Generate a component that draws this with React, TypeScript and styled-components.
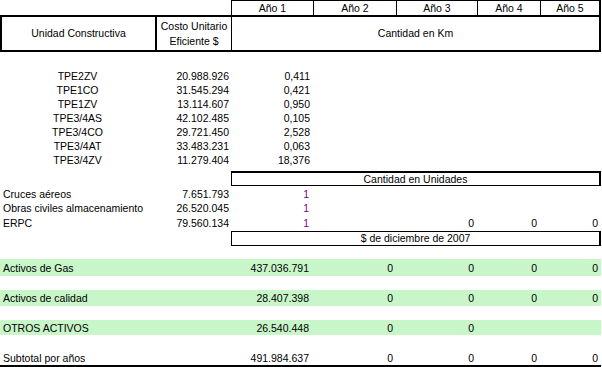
import React from "react";
import styled, { createGlobalStyle } from "styled-components";

const GlobalStyle = createGlobalStyle`
  html, body { margin: 0; padding: 0; background: #ffffff; }
  * { box-sizing: border-box; }
`;

const COLS = "155px 76px 82px 83px 81px 63px 61px";

const Sheet = styled.div`
  width: 602px;
  height: 367px;
  overflow: hidden;
  font-family: "Liberation Sans", Arial, sans-serif;
  font-size: 10.5px;
  color: #000;
  display: flex;
  flex-direction: column;
`;

const Row = styled.div<{ $h: number; $mt?: number; $green?: boolean; $bottom?: boolean }>`
  display: grid;
  grid-template-columns: ${COLS};
  width: 601px;
  height: ${(p) => p.$h}px;
  margin-top: ${(p) => p.$mt ?? 0}px;
  background: ${(p) => (p.$green ? "#c8f6c8" : "transparent")};
  border-bottom: ${(p) => (p.$bottom ? "2px solid #000" : "none")};
  flex-shrink: 0;
`;

const Cell = styled.div<{ $align?: "left" | "center" | "right"; $pad?: number; $color?: string; $span?: number }>`
  display: flex;
  align-items: center;
  justify-content: ${(p) =>
    p.$align === "right" ? "flex-end" : p.$align === "center" ? "center" : "flex-start"};
  padding: 0 ${(p) => (p.$align === "right" ? p.$pad ?? 3 : 0)}px 0
    ${(p) => (p.$align === "left" || !p.$align ? p.$pad ?? 3 : 0)}px;
  color: ${(p) => p.$color ?? "#000"};
  grid-column: span ${(p) => p.$span ?? 1};
  white-space: nowrap;
  line-height: 14px;
`;

const YearCell = styled.div<{ $last?: boolean }>`
  display: flex;
  align-items: center;
  justify-content: center;
  border-top: 1px solid #000;
  border-left: 1px solid #000;
  border-right: ${(p) => (p.$last ? "2px solid #000" : "none")};
  line-height: 14px;
`;

const HeaderBox = styled.div`
  display: grid;
  grid-template-columns: 155px 76px 370px;
  width: 601px;
  height: 37px;
  border-top: 2px solid #000;
  border-bottom: 2px solid #000;
  flex-shrink: 0;
`;

const HeaderCell = styled.div<{ $lw: number; $rw?: number }>`
  display: flex;
  flex-direction: column;
  align-items: center;
  justify-content: center;
  text-align: center;
  border-left: ${(p) => p.$lw}px solid #000;
  border-right: ${(p) => (p.$rw ? `${p.$rw}px solid #000` : "none")};
  line-height: 15px;
`;

const LabelBox = styled.div<{ $mt: number; $top: number }>`
  margin-top: ${(p) => p.$mt}px;
  margin-left: 231px;
  width: 370px;
  height: 15px;
  border: 1px solid #000;
  border-top-width: ${(p) => p.$top}px;
  border-right-width: 2px;
  display: flex;
  align-items: center;
  justify-content: center;
  line-height: 13px;
  flex-shrink: 0;
`;

const Spacer = styled.div<{ $h: number }>`
  height: ${(p) => p.$h}px;
  flex-shrink: 0;
`;

const kmRows: [string, string, string][] = [
  ["TPE2ZV", "20.988.926", "0,411"],
  ["TPE1CO", "31.545.294", "0,421"],
  ["TPE1ZV", "13.114.607", "0,950"],
  ["TPE3/4AS", "42.102.485", "0,105"],
  ["TPE3/4CO", "29.721.450", "2,528"],
  ["TPE3/4AT", "33.483.231", "0,063"],
  ["TPE3/4ZV", "11.279.404", "18,376"],
];

const unitRows: { label: string; cost: string; years: string[] }[] = [
  { label: "Cruces aéreos", cost: "7.651.793", years: ["1", "", "", "", ""] },
  { label: "Obras civiles almacenamiento", cost: "26.520.045", years: ["1", "", "", "", ""] },
  { label: "ERPC", cost: "79.560.134", years: ["1", "", "0", "0", "0"] },
];

const totalRows: { label: string; values: string[]; green: boolean; h: number; mt: number }[] = [
  { label: "Activos de Gas", values: ["437.036.791", "0", "0", "0", "0"], green: true, h: 17, mt: 13 },
  { label: "Activos de calidad", values: ["28.407.398", "0", "0", "0", "0"], green: true, h: 16, mt: 14 },
  { label: "OTROS ACTIVOS", values: ["26.540.448", "0", "0", "", ""], green: true, h: 15, mt: 14 },
];

export default function App() {
  return (
    <>
      <GlobalStyle />
      <Sheet>
        <Row $h={15}>
          <Cell $span={2} />
          {["Año 1", "Año 2", "Año 3", "Año 4", "Año 5"].map((y, i) => (
            <YearCell key={y} $last={i === 4}>
              {y}
            </YearCell>
          ))}
        </Row>
        <HeaderBox>
          <HeaderCell $lw={2}>Unidad Constructiva</HeaderCell>
          <HeaderCell $lw={2}>
            <span>Costo Unitario</span>
            <span>Eficiente $</span>
          </HeaderCell>
          <HeaderCell $lw={1} $rw={2}>
            Cantidad en Km
          </HeaderCell>
        </HeaderBox>
        <Spacer $h={17} />
        {kmRows.map(([name, cost, km]) => (
          <Row key={name} $h={14}>
            <Cell $align="center">{name}</Cell>
            <Cell $align="right" $pad={2}>
              {cost}
            </Cell>
            <Cell $align="right" $pad={3}>
              {km}
            </Cell>
          </Row>
        ))}
        <LabelBox $mt={4} $top={2}>
          Cantidad en Unidades
        </LabelBox>
        {unitRows.map((r, idx) => (
          <Row key={r.label} $h={14} $mt={idx === 0 ? 1 : idx === 2 ? 1 : 0}>
            <Cell $align="left" $pad={3}>
              {r.label}
            </Cell>
            <Cell $align="right" $pad={2}>
              {r.cost}
            </Cell>
            {r.years.map((v, i) => (
              <Cell key={i} $align="right" $pad={i === 0 ? 4 : 3} $color={i === 0 ? "#800080" : "#000"}>
                {v}
              </Cell>
            ))}
          </Row>
        ))}
        <LabelBox $mt={1} $top={1}>
          $ de diciembre de 2007
        </LabelBox>
        {totalRows.map((r) => (
          <Row key={r.label} $h={r.h} $mt={r.mt} $green={r.green}>
            <Cell $align="left" $pad={3} $span={2}>
              {r.label}
            </Cell>
            {r.values.map((v, i) => (
              <Cell key={i} $align="right" $pad={i === 0 ? 4 : 3}>
                {v}
              </Cell>
            ))}
          </Row>
        ))}
        <Row $h={16} $mt={16} $bottom>
          <Cell $align="left" $pad={3} $span={2}>
            Subtotal por años
          </Cell>
          {["491.984.637", "0", "0", "0", "0"].map((v, i) => (
            <Cell key={i} $align="right" $pad={i === 0 ? 4 : 3}>
              {v}
            </Cell>
          ))}
        </Row>
      </Sheet>
    </>
  );
}
